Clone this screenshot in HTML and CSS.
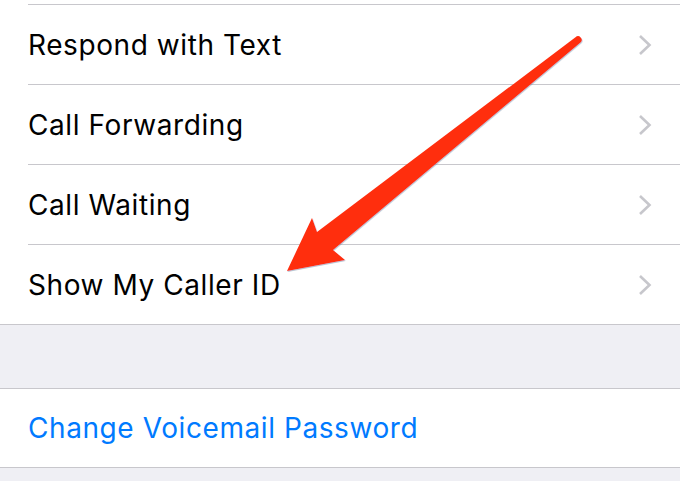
FILE: index.html
```html
<!DOCTYPE html>
<html>
<head>
<meta charset="utf-8">
<link rel="stylesheet" href="styles.css">
</head>
<body>
<div class="screen">
  <div class="group">
    <div class="lead"></div>
    <div class="row"><span class="label">Respond with Text</span><svg class="chev" viewBox="0 0 14 22"><path d="M2 2 L11.5 11 L2 20" /></svg></div>
    <div class="row"><span class="label">Call Forwarding</span><svg class="chev" viewBox="0 0 14 22"><path d="M2 2 L11.5 11 L2 20" /></svg></div>
    <div class="row"><span class="label">Call Waiting</span><svg class="chev" viewBox="0 0 14 22"><path d="M2 2 L11.5 11 L2 20" /></svg></div>
    <div class="row"><span class="label">Show My Caller ID</span><svg class="chev" viewBox="0 0 14 22"><path d="M2 2 L11.5 11 L2 20" /></svg></div>
  </div>
  <div class="gap"></div>
  <div class="group group-single">
    <div class="row row-link"><span class="label link">Change Voicemail Password</span></div>
  </div>
  <svg class="arrow" viewBox="0 0 680 481" width="680" height="481">
    <defs>
      <filter id="sh" x="-10%" y="-10%" width="120%" height="120%">
        <feDropShadow dx="0.6" dy="1" stdDeviation="0.7" flood-color="#5a7a9a" flood-opacity="0.45"/>
      </filter>
    </defs>
    <path filter="url(#sh)" fill="#ff2d0c" d="M287 271 L312 218 L317 232 L575.5 37.3 A3.4 3.4 0 0 1 580.5 42.6 L333 250 L345 260 Z"/>
  </svg>
</div>
</body>
</html>
```
FILE: styles.css
```css
html, body {
  margin: 0;
  padding: 0;
  background: #efeff4;
}
.screen {
  position: relative;
  width: 680px;
  height: 481px;
  overflow: hidden;
  background: #efeff4;
  font-family: Inter, "Liberation Sans", sans-serif;
}
.group {
  background: #ffffff;
  border-bottom: 1px solid #c8c7cc;
}
.group-single {
  border-top: 1px solid #c8c7cc;
}
.lead {
  height: 4px;
}
.row {
  display: flex;
  align-items: center;
  justify-content: space-between;
  height: 79px;
  margin-left: 28px;
  border-top: 1px solid #c8c7cc;
  padding-right: 28px;
}
.row-link {
  border-top: none;
  height: 78px;
}
.label {
  font-size: 28px;
  color: #000000;
  letter-spacing: 0.58px;
}
.link {
  color: #007aff;
}
.chev {
  width: 14px;
  height: 22px;
  fill: none;
  stroke: #c7c7cc;
  stroke-width: 2.6;
}
.gap {
  height: 63px;
}
.arrow {
  position: absolute;
  left: 0;
  top: 0;
}
```
